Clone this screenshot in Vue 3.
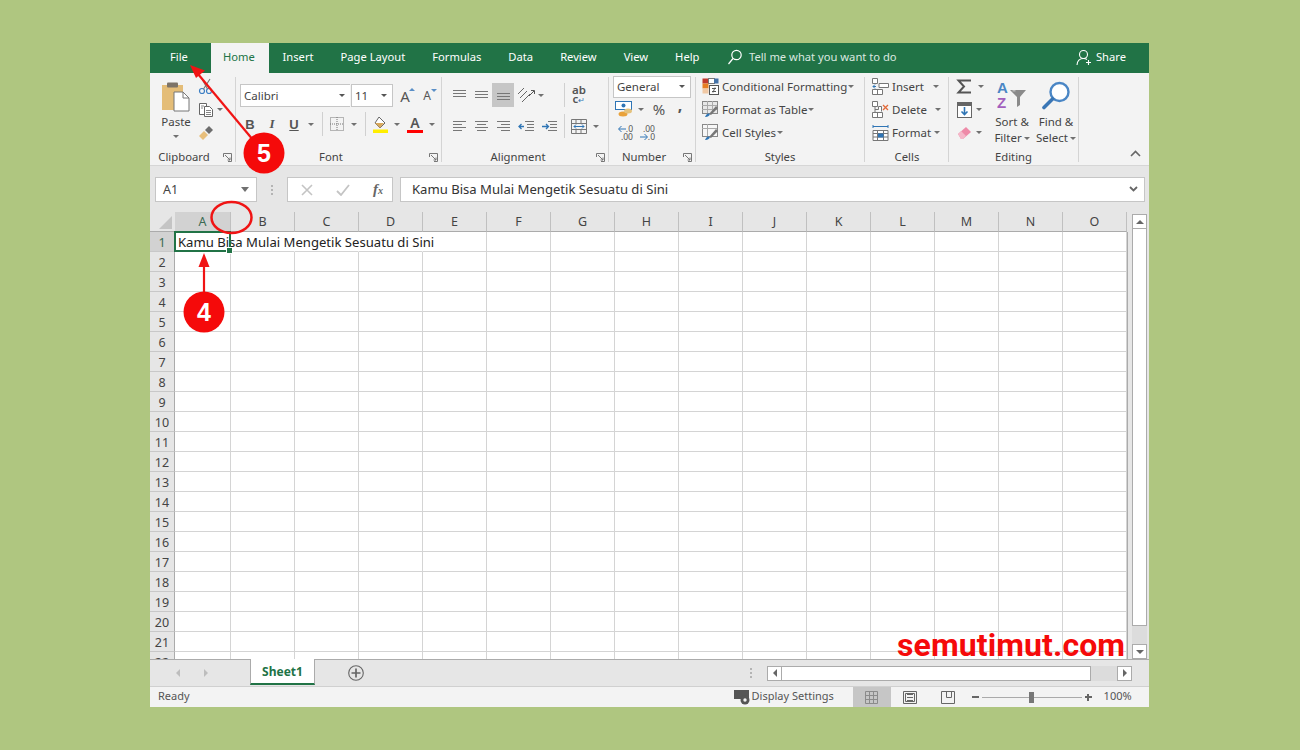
<template>
  <div class="page">
    <div class="window">
      <!-- tabs -->
      <div class="tabs">
        <div class="tab file">File</div>
        <div class="tab home">Home</div>
        <div v-for="t in tabs" :key="t" class="tab">{{ t }}</div>
        <div class="tell">
          <svg width="16" height="16" viewBox="0 0 16 16" fill="none" stroke="#fff" stroke-width="1.2"><circle cx="9.5" cy="6" r="4.7"/><path d="M6 9.5 1.5 15"/></svg>
          <span>Tell me what you want to do</span>
        </div>
        <div class="share">
          <svg width="17" height="17" viewBox="0 0 17 17" fill="none" stroke="#fff" stroke-width="1.1"><circle cx="7.5" cy="5.5" r="4"/><path d="M1 16c.3-4 2.5-6.500 6.500-6.500 1.500 0 2.500.3 3.500 1M12.500 11v5M10 13.500h5"/></svg>
          <span>Share</span>
        </div>
      </div>

      <!-- ribbon -->
      <div class="ribbon">
        <section class="group g-clip">
          <div class="body clip-body">
            <div class="paste">
              <svg width="30" height="31" viewBox="0 0 30 31"><rect x="1" y="4" width="21" height="25" fill="#e4bd78"/><rect x="6" y="1.500" width="11" height="5" rx="1" fill="#7d7468"/><path d="M13 11h9l6 6v13H13z" fill="#fff" stroke="#777" stroke-width="1"/><path d="M22 11v6h6" fill="none" stroke="#777"/></svg>
              <span class="paste-label">Paste</span>
              <i class="caret"></i>
            </div>
            <div class="clip-side">
              <div class="tool">
                <svg width="16" height="17" viewBox="0 0 16 17" fill="none"><circle cx="4" cy="13" r="2.500" stroke="#3d7fc4" stroke-width="1.200"/><circle cx="11" cy="13" r="2.500" stroke="#3d7fc4" stroke-width="1.200"/><path d="M5.500 11 12 1M9.500 11 4 1" stroke="#777" stroke-width="1.100"/></svg>
              </div>
              <div class="line">
                <div class="tool">
                  <svg width="16" height="16" viewBox="0 0 16 16" fill="#fff" stroke="#666"><path d="M1.500 1.500h7v11h-7z"/><path d="M6.500 4.500h5l3 3v7h-8z"/><path d="M8 8.500h5M8 10.500h5M8 12.500h5M3 4h3M3 6h2" stroke-width=".8"/></svg>
                </div>
                <i class="caret"></i>
              </div>
              <div class="tool">
                <svg width="16" height="16" viewBox="0 0 16 16"><path d="M1 11 6 6l4 4-5 5z" fill="#e8bf7c"/><path d="m7 5 4-4 4 4-4 4z" fill="#6d6d6d"/></svg>
              </div>
            </div>
          </div>
          <div class="label">Clipboard</div>
          <svg class="launcher" width="9" height="9" viewBox="0 0 9 9" fill="none" stroke="#777"><path d="M.500 4V.500H8.500V8.500H5M2 2l5 5M7 4.500V7H4.500"/></svg>
        </section>

        <section class="group g-font">
          <div class="body">
            <div class="line font-line">
              <div class="combo font-name"><span>Calibri</span><i class="caret dark"></i></div>
              <div class="combo font-size"><span>11</span><i class="caret dark"></i></div>
              <div class="size-btn big">A<i class="up"></i></div>
              <div class="size-btn small">A<i class="down"></i></div>
            </div>
            <div class="line tool-line">
              <div class="tool fmt b">B</div>
              <div class="tool fmt it">I</div>
              <div class="tool fmt u">U</div>
              <div class="cw"><i class="caret"></i></div>
              <i class="vsep"></i>
              <div class="tool">
                <svg width="14" height="14" viewBox="0 0 14 14" fill="none" stroke="#777" stroke-dasharray="1 1"><path d="M.500.500h13v13H.500zM7 0v14M0 7h14"/></svg>
              </div>
              <div class="cw"><i class="caret"></i></div>
              <i class="vsep"></i>
              <div class="tool">
                <svg width="17" height="17" viewBox="0 0 17 17"><path d="m7 1 6 6-5 5-5-5z" fill="#fff" stroke="#666"/><path d="M3 7h9l-4 5z" fill="#d9a95c"/><rect x="1" y="13.500" width="15" height="3.500" fill="#ffee00"/></svg>
              </div>
              <div class="cw"><i class="caret"></i></div>
              <div class="tool color-a">A<i></i></div>
              <div class="cw"><i class="caret"></i></div>
            </div>
          </div>
          <div class="label">Font</div>
          <svg class="launcher" width="9" height="9" viewBox="0 0 9 9" fill="none" stroke="#777"><path d="M.500 4V.500H8.500V8.500H5M2 2l5 5M7 4.500V7H4.500"/></svg>
        </section>

        <section class="group g-align">
          <div class="body">
            <div class="line align-top">
              <div class="tool"><svg width="15" height="12" viewBox="0 0 15 12" stroke="#777"><path d="M1 1.500h13M1 4.500h13M1 7.500h13"/></svg></div>
              <div class="tool"><svg width="15" height="12" viewBox="0 0 15 12" stroke="#777"><path d="M1 2.500h13M1 5.500h13M1 8.500h13"/></svg></div>
              <div class="tool selected"><svg width="15" height="12" viewBox="0 0 15 12" stroke="#777"><path d="M1 4.500h13M1 7.500h13M1 10.500h13"/></svg></div>
              <div class="tool orient">
                <svg width="18" height="16" viewBox="0 0 18 16" fill="none" stroke="#666"><path d="m1 7 6-6M3 11l7-7M5 15l8-8"/><path d="m12 9 5-5M14 3.500h3.500V7" stroke="#555"/></svg>
              </div>
              <div class="cw tight"><i class="caret"></i></div>
              <i class="vsep tall"></i>
              <div class="tool wrap-t">ab<br />c<span>↵</span></div>
            </div>
            <div class="line tool-line align-bottom">
              <div class="tool"><svg width="15" height="12" viewBox="0 0 15 12" stroke="#777"><path d="M1 1.500h13M1 4.500h9M1 7.500h13M1 10.500h9"/></svg></div>
              <div class="tool"><svg width="15" height="12" viewBox="0 0 15 12" stroke="#777"><path d="M1 1.500h13M3 4.500h9M1 7.500h13M3 10.500h9"/></svg></div>
              <div class="tool"><svg width="15" height="12" viewBox="0 0 15 12" stroke="#777"><path d="M1 1.500h13M5 4.500h9M1 7.500h13M5 10.500h9"/></svg></div>
              <div class="tool orient"><svg width="17" height="13" viewBox="0 0 17 13" fill="none"><path d="M7 1.500h9M9 4.500h7M9 7.500h7M7 10.500h9" stroke="#777"/><path d="M6 6.500H1M3.500 4 1 6.500 3.500 9" stroke="#2f75b5" stroke-width="1.300"/></svg></div>
              <div class="tool ind"><svg width="17" height="13" viewBox="0 0 17 13" fill="none"><path d="M7 1.500h9M9 4.500h7M9 7.500h7M7 10.500h9" stroke="#777"/><path d="M1 6.500h6M5 4l2.500 2.500L5 9" stroke="#2f75b5" stroke-width="1.300"/></svg></div>
              <i class="vsep tall2"></i>
              <div class="tool"><svg width="16" height="15" viewBox="0 0 16 15" fill="none" stroke="#777"><path d="M.500.500h15v14H.500zM0 4.500h16M0 10.500h16M5 .500v4M10 .500v4M5 10.500v4M10 10.500v4"/><path d="M3 7.500h10M5 5.500l-2 2 2 2M11 5.500l2 2-2 2" stroke="#2f75b5"/></svg></div>
              <div class="cw"><i class="caret"></i></div>
            </div>
          </div>
          <div class="label">Alignment</div>
          <svg class="launcher" width="9" height="9" viewBox="0 0 9 9" fill="none" stroke="#777"><path d="M.500 4V.500H8.500V8.500H5M2 2l5 5M7 4.500V7H4.500"/></svg>
        </section>

        <section class="group g-number">
          <div class="body">
            <div class="combo general"><span>General</span><i class="caret dark"></i></div>
            <div class="line num-line">
              <div class="tool"><svg width="18" height="16" viewBox="0 0 18 16"><rect x=".500" y=".500" width="16" height="8" fill="#fff" stroke="#2f75b5"/><circle cx="8.500" cy="4.500" r="2" fill="#2f75b5"/><ellipse cx="8" cy="13" rx="4.500" ry="2.500" fill="#e9a23b"/><ellipse cx="13" cy="10" rx="4" ry="2.500" fill="#e4c27d"/></svg></div>
              <div class="cw"><i class="caret"></i></div>
              <div class="tool pct">%</div>
              <div class="tool comma">,</div>
            </div>
            <div class="line dec-line">
              <div class="tool dec">
                <span class="dec-row"><svg width="8" height="8" viewBox="0 0 8 8" fill="none" stroke="#2f75b5"><path d="M8 4H1M3.500 1 .500 4l3 3"/></svg>.0</span>
                <span class="dec-row">.00</span>
              </div>
              <div class="tool dec">
                <span class="dec-row">.00</span>
                <span class="dec-row"><svg width="8" height="8" viewBox="0 0 8 8" fill="none" stroke="#2f75b5"><path d="M0 4h7M4.500 1l3 3-3 3"/></svg>.0</span>
              </div>
            </div>
          </div>
          <div class="label">Number</div>
          <svg class="launcher" width="9" height="9" viewBox="0 0 9 9" fill="none" stroke="#777"><path d="M.500 4V.500H8.500V8.500H5M2 2l5 5M7 4.500V7H4.500"/></svg>
        </section>

        <section class="group g-styles">
          <div class="body">
            <div class="list-row">
              <svg width="17" height="17" viewBox="0 0 17 17"><rect x=".500" y=".500" width="6" height="5" fill="#c0392b"/><rect x="6.500" y=".500" width="6" height="5" fill="#fff" stroke="#777"/><rect x="12" y=".500" width="4.500" height="5" fill="#4472a8"/><rect x=".500" y="5.500" width="6" height="5" fill="#e67e22"/><rect x=".500" y="10.500" width="6" height="5" fill="#f1c9a5"/><rect x="7.500" y="7.500" width="9" height="9" fill="#fff" stroke="#555"/><path d="M10 10.500h4M10 13.500h4M13 9.500l-2 5" stroke="#555" fill="none"/></svg>
              <span>Conditional Formatting</span><i class="caret"></i>
            </div>
            <div class="list-row">
              <svg width="17" height="17" viewBox="0 0 17 17"><rect x=".500" y=".500" width="15" height="12" fill="#e8e8e8" stroke="#888"/><path d="M0 4.500h15M5.500 0v12M10.500 0v12M0 8.500h15" stroke="#aaa"/><path d="m7 13 7-8 2 2-7 7z" fill="#777"/><path d="M3 16c1-2 2-4 4.500-3.500 1 2-2 3.500-4.500 3.500z" fill="#2f75b5"/></svg>
              <span>Format as Table</span><i class="caret"></i>
            </div>
            <div class="list-row">
              <svg width="17" height="17" viewBox="0 0 17 17"><rect x=".500" y=".500" width="15" height="12" fill="#f7f7f7" stroke="#888"/><path d="M0 4.500h15M5.500 0v12" stroke="#aaa"/><path d="m7 13 7-8 2 2-7 7z" fill="#777"/><path d="M3 16c1-2 2-4 4.500-3.500 1 2-2 3.500-4.500 3.500z" fill="#2f75b5"/></svg>
              <span>Cell Styles</span><i class="caret"></i>
            </div>
          </div>
          <div class="label">Styles</div>
        </section>

        <section class="group g-cells">
          <div class="body">
            <div class="list-row">
              <svg width="17" height="17" viewBox="0 0 17 17" fill="#fff" stroke="#777"><path d="M.500.500h5v5h-5zM.500 11.500h10v5H.500zM5.500 11.500v5"/><path d="M7 5.500h9.500v4H7z"/><path d="M4 8.500H1M3 6.500 1 8.500l2 2" fill="none" stroke="#2f75b5"/></svg>
              <span>Insert</span><i class="caret c-ins"></i>
            </div>
            <div class="list-row">
              <svg width="17" height="17" viewBox="0 0 17 17" fill="#fff" stroke="#777"><path d="M.500.500h5v5h-5zM.500 11.500h10v5H.500zM5.500 11.500v5M3 6v5M3 8.500h3.500v-3h3v5"/><path d="m11 4 5 5M16 4l-5 5" stroke="#e26b3b" stroke-width="1.300"/></svg>
              <span>Delete</span><i class="caret c-del"></i>
            </div>
            <div class="list-row">
              <svg width="17" height="17" viewBox="0 0 17 17" fill="#fff" stroke="#777"><path d="M1 6.500h15v10H1zM1 9.500h15M1 13h15M5.500 6.500v10M11.500 6.500v10"/><rect x="6" y="9.500" width="5.500" height="4" fill="#2f75b5" stroke="none"/><path d="M1 2.500h15M1 1v3M16 1v3" stroke="#2f75b5"/></svg>
              <span>Format</span><i class="caret c-fmt"></i>
            </div>
          </div>
          <div class="label">Cells</div>
        </section>

        <section class="group g-edit">
          <div class="body edit-body">
            <div class="edit-side">
              <div class="line">
                <div class="tool"><svg width="16" height="15" viewBox="0 0 16 15" fill="none" stroke="#555" stroke-width="2"><path d="M15 1.500H2.500L8 7.500l-5.500 6H15"/></svg></div>
                <div class="cw"><i class="caret"></i></div>
              </div>
              <div class="line">
                <div class="tool"><svg width="15" height="16" viewBox="0 0 15 16"><rect x=".500" y=".500" width="14" height="15" fill="#fff" stroke="#666"/><rect y="0" width="15" height="4" fill="#666"/><path d="M7.500 5v7M4.500 9.500l3 3 3-3" stroke="#2f75b5" stroke-width="1.600" fill="none"/></svg></div>
                <div class="cw nudge"><i class="caret"></i></div>
              </div>
              <div class="line">
                <div class="tool"><svg width="15" height="14" viewBox="0 0 15 14"><path d="m1 8 8-7 5 5-8 7H4z" fill="#ee8aa8"/><path d="m1 8 3-3 5 5-3 3H4z" fill="#f5b7c9"/></svg></div>
                <div class="cw nudge"><i class="caret"></i></div>
              </div>
            </div>
            <div class="big-btn sort">
              <div class="big-icon">
                <svg width="30" height="29" viewBox="0 0 30 29"><text x="0" y="12" class="az a">A</text><text x="0" y="27" class="az z">Z</text><path d="M13 9h16l-6 7v8l-3 2V16z" fill="#8a8a8a"/><path d="M15.500 9h3v1.500h-3z" fill="#bbb"/></svg>
              </div>
              <div class="big-text">Sort &amp;</div>
              <div class="big-text">Filter<i class="caret inl"></i></div>
            </div>
            <div class="big-btn find">
              <div class="big-icon">
                <svg width="30" height="29" viewBox="0 0 30 29" fill="none"><circle cx="18.500" cy="11" r="9" stroke="#4a86c5" stroke-width="2.400" fill="#fff"/><path d="m11.500 18-8.500 8.500" stroke="#3a76b5" stroke-width="3.600" stroke-linecap="round"/></svg>
              </div>
              <div class="big-text">Find &amp;</div>
              <div class="big-text">Select<i class="caret inl"></i></div>
            </div>
          </div>
          <div class="label">Editing</div>
        </section>

        <div class="collapse">
          <svg width="11" height="7" viewBox="0 0 11 7" fill="none" stroke="#666" stroke-width="1.600"><path d="m1 6 4.500-4.500L10 6"/></svg>
        </div>
      </div>

      <!-- formula bar -->
      <div class="formula">
        <div class="namebox"><span>A1</span><i class="caret wide"></i></div>
        <div class="grip"><i></i><i></i><i></i></div>
        <div class="fx-box">
          <svg width="12" height="12" viewBox="0 0 12 12" stroke="#c4c4c4" stroke-width="1.600"><path d="m1 1 10 10M11 1 1 11"/></svg>
          <svg width="14" height="12" viewBox="0 0 14 12" fill="none" stroke="#c4c4c4" stroke-width="1.800"><path d="m1 7 4 4 8-10"/></svg>
          <span class="fx">f<small>x</small></span>
        </div>
        <div class="input">
          <span>Kamu Bisa Mulai Mengetik Sesuatu di Sini</span>
          <svg width="9" height="6" viewBox="0 0 9 6" fill="none" stroke="#666" stroke-width="1.800"><path d="m1 1 3.500 3.500L8 1"/></svg>
        </div>
      </div>

      <!-- sheet -->
      <div class="sheet">
        <div class="grid">
          <div class="row head-row">
            <div class="corner"><i></i></div>
            <div v-for="(c, i) in columns" :key="c" class="col-head" :class="{ first: i === 0, on: i === 0 }">{{ c }}</div>
          </div>
          <div v-for="r in 22" :key="r" class="row">
            <div class="row-head" :class="{ on: r === 1 }">{{ r }}</div>
            <div
              v-for="(c, i) in columns"
              :key="c"
              class="cell"
              :class="{ first: i === 0, spill: r === 1 && i < 4, active: r === 1 && i === 0 }"
            >
              <span v-if="r === 1 && i === 0" class="cell-text">Kamu Bisa Mulai Mengetik Sesuatu di Sini</span>
              <i v-if="r === 1 && i === 0" class="handle"></i>
            </div>
          </div>
        </div>
        <div class="vscroll">
          <div class="sbtn"><i class="tri up"></i></div>
          <div class="vthumb"></div>
          <div class="vtrack"></div>
          <div class="sbtn"><i class="tri down"></i></div>
        </div>
      </div>

      <!-- sheet tabs -->
      <div class="sheetbar">
        <div class="nav">
          <i class="nav-l"></i>
          <i class="nav-r"></i>
        </div>
        <div class="sheet-tab">Sheet1</div>
        <div class="add">
          <svg width="16" height="16" viewBox="0 0 16 16" fill="none" stroke="#666"><circle cx="8" cy="8" r="7.300" stroke-width="1.100"/><path d="M8 3.500v9M3.500 8h9" stroke-width="1.700"/></svg>
        </div>
        <div class="grip bar-grip"><i></i><i></i><i></i></div>
        <div class="hscroll">
          <div class="sbtn h"><i class="tri left"></i></div>
          <div class="hthumb"></div>
          <div class="htrack"></div>
          <div class="sbtn h"><i class="tri right"></i></div>
        </div>
      </div>

      <!-- status bar -->
      <div class="status">
        <span class="ready">Ready</span>
        <div class="display">
          <svg width="16" height="15" viewBox="0 0 16 15"><rect y="0" width="15" height="9" fill="#555"/><circle cx="11" cy="10" r="4.500" fill="#555"/><circle cx="11" cy="10" r="1.700" fill="#f3f3f3"/></svg>
          <span>Display Settings</span>
        </div>
        <div class="view on">
          <svg width="13" height="13" viewBox="0 0 13 13" fill="none" stroke="#8b8b8b"><path d="M.500.500h12v12H.500zM4.500 0v13M8.500 0v13M0 4.500h13M0 8.500h13"/></svg>
        </div>
        <div class="view">
          <svg width="14" height="13" viewBox="0 0 14 13" fill="none" stroke="#666"><path d="M.500.500h13v12H.500zM4 3.500h6M4 6.500h6M4 9.500h6M2.500 2.500h9v8h-9z"/></svg>
        </div>
        <div class="view">
          <svg width="14" height="13" viewBox="0 0 14 13" fill="none" stroke="#666"><path d="M.500.500h13v12H.500zM5.500.500v6h5v-6"/></svg>
        </div>
        <div class="zoom">
          <i class="minus"></i>
          <div class="slider"><i class="knob"></i></div>
          <i class="plus"></i>
        </div>
        <span class="pct-label">100%</span>
      </div>
    </div>

    <!-- annotations drawn over the screenshot -->
    <svg class="marks" width="1300" height="750" viewBox="0 0 1300 750">
      <ellipse cx="231.500" cy="217.500" rx="20" ry="15.500" fill="none" stroke="#f01414" stroke-width="2.500"/>
      <path d="M264 153 198 74" stroke="#f01414" stroke-width="2.200"/>
      <path d="m190 65 15 5.500-9 7.500z" fill="#f01414"/>
      <path d="M204 292v-32" stroke="#f01414" stroke-width="2.200"/>
      <path d="m204 253 5.500 14h-11z" fill="#f01414"/>
      <circle cx="264" cy="153" r="20.500" fill="#f50a0a"/>
      <circle cx="204" cy="312" r="20.500" fill="#f50a0a"/>
      <text x="264" y="162" class="num">5</text>
      <text x="204" y="321" class="num">4</text>
    </svg>
    <div class="brand">semutimut.com</div>
  </div>
</template>

<script setup>
const tabs = ['Insert', 'Page Layout', 'Formulas', 'Data', 'Review', 'View', 'Help']
const columns = 'ABCDEFGHIJKLMNO'.split('')
</script>

<style>
html,
body {
  margin: 0;
  background: #afc680;
}
</style>

<style scoped>
.page {
  position: relative;
  width: 1300px;
  height: 750px;
  padding: 43px 0 0 150px;
  box-sizing: border-box;
  background: #afc680;
  overflow: hidden;
  font-family: 'Noto Sans', 'Open Sans', sans-serif;
  font-size: 11.5px;
  color: #444;
}
i {
  display: block;
  font-style: normal;
}
.window {
  width: 999px;
  height: 664px;
  display: flex;
  flex-direction: column;
  background: #e6e6e6;
}

/* tabs */
.tabs {
  height: 30px;
  flex: none;
  display: flex;
  align-items: stretch;
  background: #217346;
  color: #fff;
  font-size: 11.2px;
  line-height: 28px;
}
.tab {
  padding: 0 13.5px;
  display: flex;
  align-items: flex-start;
}
.tab.file {
  width: 61px;
  box-sizing: border-box;
  padding: 0 0 0 20px;
}
.tab.home {
  width: 58px;
  box-sizing: border-box;
  padding: 0 0 0 12px;
  background: #f3f3f3;
  color: #217346;
}
.tell {
  margin-left: 14px;
  display: flex;
  align-items: center;
  gap: 6px;
  color: #dbe9e0;
  padding-bottom: 2px;
}
.share {
  margin-left: auto;
  margin-right: 23px;
  display: flex;
  align-items: center;
  gap: 3px;
  padding-bottom: 2px;
}

/* ribbon */
.ribbon {
  height: 93px;
  flex: none;
  box-sizing: border-box;
  display: flex;
  background: #f3f3f3;
  border-bottom: 1px solid #d6d6d6;
  padding-top: 4px;
}
.group {
  position: relative;
  flex: none;
  box-sizing: border-box;
  height: 85px;
  border-right: 1px solid #d4d4d4;
  display: flex;
  flex-direction: column;
}
.body {
  height: 72px;
  box-sizing: border-box;
  flex: none;
}
.label {
  text-align: center;
  line-height: 15px;
  font-size: 11.3px;
}
.launcher {
  position: absolute;
  right: 3px;
  bottom: 0;
}
.line {
  display: flex;
  align-items: center;
}
.tool {
  width: 22px;
  height: 22px;
  flex: none;
  display: flex;
  align-items: center;
  justify-content: center;
}
.cw {
  width: 12px;
  flex: none;
  display: flex;
  justify-content: center;
}
.caret {
  width: 0;
  height: 0;
  flex: none;
  border-left: 3px solid transparent;
  border-right: 3px solid transparent;
  border-top: 3px solid #707070;
}
.caret.dark {
  border-top-color: #555;
}
.vsep {
  width: 1px;
  height: 24px;
  flex: none;
  margin: 0 3px 0 5px;
  background: #d0d0d0;
}

.g-clip {
  width: 86px;
}
.g-clip .label {
  margin-right: 17px;
}
.clip-body {
  display: flex;
  padding: 4px 0 0 10px;
}
.paste {
  width: 32px;
  display: flex;
  flex-direction: column;
  align-items: center;
}
.paste-label {
  margin-top: 2px;
  line-height: 16px;
}
.paste .caret {
  margin-top: 5px;
}
.clip-side {
  margin: -6px 0 0 3px;
}
.clip-side .tool {
  height: 23px;
}

.g-font {
  width: 206px;
  padding-left: 3px;
}
.g-font .label {
  margin-right: 18px;
}
.font-line {
  margin-top: 7px;
  padding-left: 1px;
}
.combo {
  box-sizing: border-box;
  height: 23px;
  background: #fff;
  border: 1px solid #c6c6c6;
  display: flex;
  align-items: center;
  justify-content: space-between;
  padding: 0 5px 0 3px;
  flex: none;
}
.font-name {
  width: 110px;
  border-right: 0;
}
.font-size {
  width: 42px;
  margin-left: 1px;
}
.size-btn {
  position: relative;
  width: 22px;
  text-align: center;
  color: #555;
}
.size-btn.big {
  margin-left: 1px;
  font-size: 15px;
}
.size-btn.small {
  font-size: 12px;
}
.size-btn i {
  position: absolute;
  top: 2px;
  right: 1px;
  border-left: 3px solid transparent;
  border-right: 3px solid transparent;
}
.size-btn .up {
  border-bottom: 3px solid #5a8fc7;
}
.size-btn .down {
  border-top: 3px solid #5a8fc7;
}
.tool-line {
  margin-top: 5px;
}
.fmt {
  font-family: 'Liberation Serif', serif;
  font-size: 13px;
  color: #555;
}
.fmt.b {
  font-family: 'Liberation Sans', sans-serif;
  font-weight: bold;
}
.fmt.it {
  font-style: italic;
  font-weight: bold;
}
.fmt.u {
  font-family: 'Liberation Sans', sans-serif;
  font-weight: bold;
  text-decoration: underline;
}
.color-a {
  position: relative;
  margin-left: 1px;
  font-size: 14px;
  line-height: 14px;
  color: #555;
  font-weight: 600;
  padding-bottom: 3px;
  box-sizing: border-box;
}
.color-a i {
  position: absolute;
  left: 3px;
  bottom: 2px;
  width: 16px;
  height: 3px;
  background: #f00;
}

.g-align {
  width: 167px;
  padding-left: 6px;
}
.g-align .label {
  margin-right: 20px;
}
.align-top {
  margin-top: 6px;
}
.align-top .tool {
  height: 24px;
}
.selected {
  background: #c6c6c6;
}
.orient {
  margin-left: 1px;
}
.cw.tight {
  margin-left: -2px;
}
.ind {
  margin-left: 1px;
}
.vsep.tall {
  margin-left: 17px;
}
.vsep.tall2 {
  margin-left: 4px;
}
.wrap-t {
  font-size: 11.5px;
  line-height: 9px;
  display: block;
  padding-top: 2px;
  box-sizing: border-box;
  text-align: center;
  color: #555;
  font-weight: 600;
}
.wrap-t span {
  color: #2f75b5;
  font-weight: normal;
  font-size: 8px;
}
.align-bottom {
  margin-top: 7px;
}

.g-number {
  width: 87px;
  padding-left: 4px;
}
.g-number .label {
  margin-right: 20px;
}
.general {
  width: 78px;
  height: 22px;
  margin-top: -1px;
  padding-bottom: 1px;
}
.num-line {
  margin-top: 0;
  height: 22px;
}
.pct {
  margin-left: 1px;
  font-size: 15px;
  color: #555;
}
.comma {
  margin-left: -1px;
  font-size: 16px;
  font-weight: bold;
  padding-bottom: 8px;
  box-sizing: border-box;
  color: #555;
}
.dec-line {
  margin-top: 2px;
}
.dec {
  flex-direction: column;
  align-items: flex-end;
  font-size: 8.5px;
  line-height: 8px;
  color: #555;
  padding-right: 2px;
  box-sizing: border-box;
}
.dec-row {
  display: flex;
  align-items: center;
  height: 8px;
}

.g-styles {
  width: 169px;
  padding: 0 0 0 6px;
}
.g-styles .body,
.g-cells .body {
  margin-top: -2px;
  height: 74px;
}
.g-styles .label,
.g-cells .label {
  margin-right: 6px;
}
.list-row {
  height: 23px;
  display: flex;
  align-items: center;
  gap: 3px;
  white-space: nowrap;
}
.list-row .caret {
  margin-left: -2px;
}
.g-cells {
  width: 84px;
  padding-left: 7px;
}
.g-cells .list-row {
  gap: 3px;
}
.g-cells .list-row .caret.c-ins {
  margin-left: 6px;
}
.g-cells .list-row .caret.c-del {
  margin-left: 5px;
}
.g-cells .list-row .caret.c-fmt {
  margin-left: 0;
}

.g-edit {
  width: 130px;
}
.edit-body {
  display: flex;
  padding-left: 4px;
}
.edit-side {
  margin-top: -2px;
}
.edit-side .line {
  height: 23px;
}
.cw.nudge {
  margin-left: -2px;
}
.big-btn {
  text-align: center;
  line-height: 16px;
}
.big-btn.find {
  margin-left: 1px;
  width: 46px;
}
.big-btn.sort {
  margin-left: 4px;
  width: 44px;
}
.big-icon {
  height: 37px;
  padding-top: 4px;
  box-sizing: border-box;
}
.big-text {
  white-space: nowrap;
}
.caret.inl {
  display: inline-block;
  vertical-align: middle;
  margin-left: 2px;
}
.az {
  font-family: 'Liberation Sans', sans-serif;
  font-size: 15px;
  font-weight: bold;
}
.az.a {
  fill: #4a86c5;
}
.az.z {
  fill: #a25fbd;
}
.collapse {
  margin-left: auto;
  margin-right: 8px;
  align-self: flex-end;
  padding-bottom: 5px;
}

/* formula bar */
.formula {
  height: 46px;
  flex: none;
  box-sizing: border-box;
  display: flex;
  align-items: flex-start;
  padding: 11px 5px 0 5px;
  background: #e6e6e6;
}
.namebox,
.fx-box,
.input {
  box-sizing: border-box;
  height: 25px;
  background: #fff;
  border: 1px solid #c6c6c6;
  display: flex;
  align-items: center;
  flex: none;
}
.namebox {
  width: 102px;
  padding: 0 7px;
  justify-content: space-between;
  font-size: 12.500px;
}
.caret.wide {
  border-left-width: 4.500px;
  border-right-width: 4.500px;
  border-top-width: 5px;
}
.grip {
  width: 30px;
  height: 25px;
  flex: none;
  display: flex;
  flex-direction: column;
  align-items: center;
  justify-content: center;
  gap: 2px;
}
.grip i {
  width: 2px;
  height: 2px;
  background: #b4b4b4;
}
.fx-box {
  width: 106px;
  padding: 0 9px 0 13px;
  justify-content: space-between;
}
.fx {
  font-family: 'Liberation Serif', serif;
  font-style: italic;
  font-weight: bold;
  font-size: 15px;
  color: #666;
}
.fx small {
  font-size: 10px;
}
.input {
  width: 745px;
  margin-left: 7px;
  padding: 0 6px 1px 11px;
  justify-content: space-between;
  font-size: 13.1px;
  color: #333;
}

/* sheet */
.sheet {
  height: 447px;
  flex: none;
  display: flex;
  overflow: hidden;
}
.grid {
  width: 978px;
  flex: none;
  background: #fff;
  overflow: hidden;
}
.row {
  display: flex;
  height: 20px;
}
.head-row {
  background: #e6e6e6;
}
.corner {
  width: 25px;
  flex: none;
  box-sizing: border-box;
  border-bottom: 1px solid #ababab;
  position: relative;
}
.corner i {
  position: absolute;
  right: 3px;
  bottom: 2px;
  width: 0;
  height: 0;
  border-left: 13px solid transparent;
  border-bottom: 13px solid #c4c4c4;
}
.col-head {
  width: 64px;
  flex: none;
  box-sizing: border-box;
  text-align: center;
  line-height: 19px;
  font-size: 12.500px;
  color: #444;
  border-right: 1px solid #c0c0c0;
  border-bottom: 1px solid #ababab;
}
.col-head.first {
  width: 56px;
}
.col-head.on {
  background: #d2d2d2;
  color: #3a6b52;
  border-bottom: 1px solid #ababab;
}
.row-head {
  width: 25px;
  flex: none;
  box-sizing: border-box;
  text-align: center;
  line-height: 21px;
  font-size: 12.500px;
  background: #e6e6e6;
  color: #444;
  border-right: 1px solid #ababab;
  border-bottom: 1px solid #c8c8c8;
}
.row-head.on {
  background: #d2d2d2;
  color: #3a6b52;
}
.cell {
  position: relative;
  width: 64px;
  flex: none;
  box-sizing: border-box;
  border-right: 1px solid #d4d4d4;
  border-bottom: 1px solid #d4d4d4;
}
.cell.first {
  width: 56px;
}
.cell.spill {
  border-right-color: transparent;
}
.cell:last-child {
  box-shadow: 1px 0 0 #ababab;
}
.cell.active::after {
  content: '';
  position: absolute;
  left: -1px;
  top: -1px;
  width: 57px;
  height: 21px;
  box-sizing: border-box;
  border: 2px solid #217346;
}
.cell-text {
  position: absolute;
  left: 3px;
  top: 0;
  white-space: nowrap;
  font-size: 13.1px;
  line-height: 20px;
  color: #222;
}
.handle {
  position: absolute;
  z-index: 2;
  right: -3px;
  bottom: -3px;
  width: 5px;
  height: 5px;
  background: #217346;
  border: 1px solid #fff;
}
.vscroll {
  width: 15px;
  margin-left: 4px;
  flex: none;
  display: flex;
  flex-direction: column;
  padding-top: 2px;
}
.sbtn {
  box-sizing: border-box;
  width: 15px;
  height: 15px;
  flex: none;
  background: #fff;
  border: 1px solid #ababab;
  display: flex;
  align-items: center;
  justify-content: center;
}
.tri {
  width: 0;
  height: 0;
}
.tri.up {
  border-left: 4px solid transparent;
  border-right: 4px solid transparent;
  border-bottom: 4px solid #666;
}
.tri.down {
  border-left: 4px solid transparent;
  border-right: 4px solid transparent;
  border-top: 4px solid #666;
}
.tri.left {
  border-top: 4px solid transparent;
  border-bottom: 4px solid transparent;
  border-right: 4px solid #666;
}
.tri.right {
  border-top: 4px solid transparent;
  border-bottom: 4px solid transparent;
  border-left: 4px solid #666;
}
.vthumb {
  box-sizing: border-box;
  height: 397px;
  flex: none;
  background: #fff;
  border: 1px solid #ababab;
  border-top: 0;
}
.vtrack {
  flex: 1;
  background: #dcdcdc;
}

/* sheet tabs */
.sheetbar {
  height: 28px;
  flex: none;
  box-sizing: border-box;
  display: flex;
  align-items: center;
  border-top: 1px solid #ababab;
  border-bottom: 1px solid #d0d0d0;
  background: #e6e6e6;
}
.nav {
  width: 100px;
  flex: none;
  display: flex;
  padding-left: 26px;
  box-sizing: border-box;
  gap: 24px;
}
.nav-l {
  border-top: 4px solid transparent;
  border-bottom: 4px solid transparent;
  border-right: 4px solid #bdbdbd;
}
.nav-r {
  border-top: 4px solid transparent;
  border-bottom: 4px solid transparent;
  border-left: 4px solid #bdbdbd;
}
.sheet-tab {
  box-sizing: border-box;
  width: 65px;
  height: 26px;
  flex: none;
  align-self: flex-start;
  margin-top: -1px;
  text-align: center;
  line-height: 25px;
  background: #fff;
  border-left: 1px solid #ababab;
  border-right: 1px solid #ababab;
  border-bottom: 2px solid #217346;
  color: #217346;
  font-weight: bold;
  font-size: 12px;
}
.add {
  width: 16px;
  height: 16px;
  margin-left: 33px;
  flex: none;
}
.bar-grip {
  width: 12px;
  margin-left: 381px;
}
.hscroll {
  width: 365px;
  margin-left: 10px;
  flex: none;
  display: flex;
}
.hthumb {
  box-sizing: border-box;
  width: 309px;
  height: 15px;
  flex: none;
  background: #fff;
  border: 1px solid #ababab;
  border-left: 0;
}
.htrack {
  flex: 1;
  background: #dcdcdc;
}

/* status */
.status {
  height: 20px;
  flex: none;
  display: flex;
  align-items: center;
  background: #f3f3f3;
  font-size: 11px;
  line-height: 18px;
  color: #555;
}
.ready {
  margin-left: 8px;
  margin-bottom: 2px;
}
.display {
  margin-left: 544px;
  width: 119px;
  flex: none;
  display: flex;
  align-items: center;
  gap: 2px;
}
.view {
  width: 38px;
  height: 20px;
  flex: none;
  display: flex;
  align-items: center;
  justify-content: center;
}
.view.on {
  background: #c6c6c6;
}
.zoom {
  margin-left: 5px;
  width: 120px;
  flex: none;
  display: flex;
  align-items: center;
  gap: 3px;
}
.minus {
  width: 7px;
  height: 2px;
  background: #666;
}
.slider {
  position: relative;
  width: 100px;
  height: 1px;
  background: #aaa;
}
.knob {
  position: absolute;
  left: 47px;
  top: -5px;
  width: 5px;
  height: 11px;
  background: #777;
}
.plus {
  position: relative;
  width: 7px;
  height: 2px;
  background: #666;
}
.plus::after {
  content: '';
  position: absolute;
  left: 2.500px;
  top: -2.500px;
  width: 2px;
  height: 7px;
  background: #666;
}
.pct-label {
  margin-left: 12px;
  margin-bottom: 2px;
}
.display span {
  margin-bottom: 2px;
}

/* annotations */
.marks {
  position: absolute;
  left: 0;
  top: 0;
  pointer-events: none;
}
.num {
  font-family: 'Liberation Sans', sans-serif;
  font-size: 25px;
  font-weight: bold;
  fill: #fff;
  text-anchor: middle;
}
.brand {
  position: absolute;
  left: 897px;
  top: 625px;
  font-family: Roboto, 'Open Sans', sans-serif;
  font-size: 32px;
  line-height: 40px;
  font-weight: 700;
  letter-spacing: 0.1px;
  color: #f50a0a;
  white-space: nowrap;
}
</style>
